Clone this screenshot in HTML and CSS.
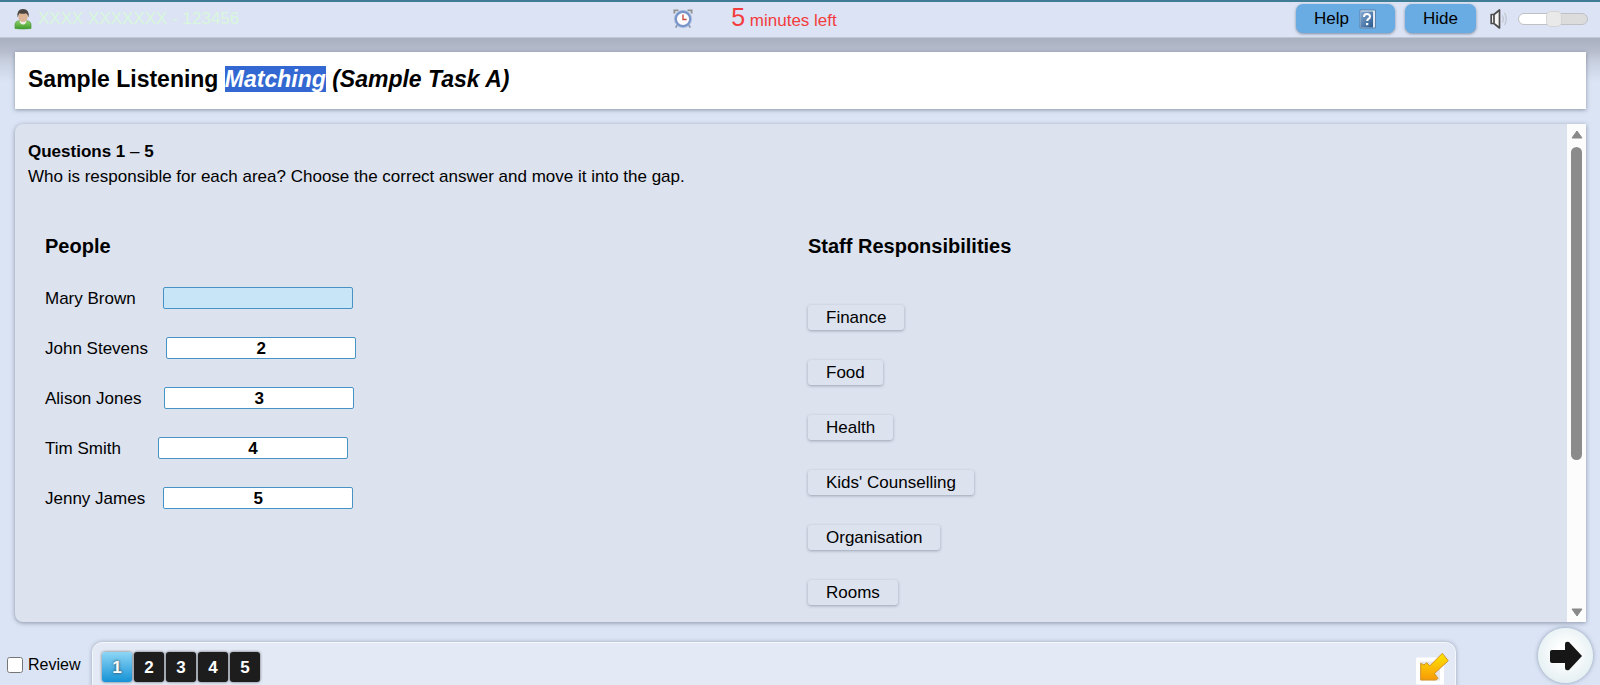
FILE: index.html
```html
<!DOCTYPE html>
<html lang="en">
<head>
<meta charset="utf-8">
<title>Sample Listening Matching</title>
<link rel="stylesheet" href="styles.css">
</head>
<body>
<header class="topbar">
  <div class="candidate">
    <svg class="icon-user" viewBox="0 0 18 22" aria-hidden="true">
      <defs>
        <linearGradient id="shirt" x1="0" y1="0" x2="0" y2="1"><stop offset="0" stop-color="#8fd06a"/><stop offset="1" stop-color="#3d9a2a"/></linearGradient>
      </defs>
      <path d="M1 20.500V17q0-4 4.500-4.300h7Q17 13 17 17v3.500q-8 1-16 0Z" fill="url(#shirt)" stroke="#4b9a38" stroke-width=".7"/>
      <path d="M5.500 12.500h7Q12 16.500 9 16.500T5.500 12.500Z" fill="#f1eee8"/>
      <ellipse cx="9" cy="8.500" rx="4.700" ry="5.500" fill="#dcb597"/>
      <path d="M3.600 9.500Q2.300 1 9 1t5.600 8.500Q13.700 6 12 5.200 9 6.500 5.400 5.200 4.300 7 3.600 9.500Z" fill="#4a4541"/>
    </svg>
    <span>XXXX XXXXXXX - 123456</span>
  </div>
  <div class="timer">
    <svg class="icon-clock" viewBox="0 0 22 22" aria-hidden="true">
      <path d="M1.500 5V1.500H6M20.500 5V1.500H16" fill="none" stroke="#929292" stroke-width="2"/>
      <path d="m5 17-2 3.500M17 17l2 3.500" stroke="#8b98ab" stroke-width="2"/>
      <circle cx="11" cy="11" r="8" fill="#fdfdff" stroke="#7895c9" stroke-width="2.600"/>
      <circle cx="11" cy="11" r="9.500" fill="none" stroke="#a6b8d8" stroke-width=".8"/>
      <path d="M11 6v5.500h4" fill="none" stroke="#c9473f" stroke-width="1.500"/>
    </svg>
    <p class="time"><span class="time-value">5</span> minutes left</p>
  </div>
  <div class="tools">
    <button class="tool" type="button">Help
      <svg class="icon-help" viewBox="0 0 18 20" aria-hidden="true">
        <defs><linearGradient id="book" x1="0" y1="0" x2="1" y2="1"><stop offset="0" stop-color="#86aad0"/><stop offset="1" stop-color="#28588f"/></linearGradient></defs>
        <path d="M1 1h15.500v18H1z" fill="#dfeaf4" stroke="#5e83aa"/>
        <path d="M1.500 2.500H14v16H1.500z" fill="url(#book)"/>
        <path d="M5 8q0-3 3-3t3 2.700Q11 9.200 9.300 10 8.200 10.600 8.200 12" fill="none" stroke="#fff" stroke-width="2"/>
        <path d="M7 14h2.300v2.200H7z" fill="#fff"/>
      </svg>
    </button>
    <button class="tool" type="button">Hide</button>
    <svg class="icon-sound" viewBox="0 0 18 20" aria-hidden="true">
      <path d="M1.200 5.500H4v9H1.200zM4 5.500 9.500 1v18L4 14.500Z" fill="#f6f6f6" stroke="#4c4c4c" stroke-width="1.700" stroke-linejoin="round"/>
      <path d="M12.300 6.500q2 3.500 0 7M14.500 4q3.500 6 0 12" fill="none" stroke="#c2c7cf" stroke-width="1.300"/>
    </svg>
    <input class="volume" type="range" min="0" max="100" value="52" aria-label="Volume">
  </div>
</header>

<main class="page">
  <h1 class="title">Sample Listening <em><mark>Matching</mark> (Sample Task A)</em></h1>

  <section class="panel">
    <div class="content">
      <p class="lead"><strong>Questions 1</strong> – <strong>5</strong><br>Who is responsible for each area? Choose the correct answer and move it into the gap.</p>
      <div class="columns">
        <div class="people">
          <h2>People</h2>
          <div class="row"><label for="q1">Mary Brown&nbsp;&nbsp;&nbsp;&nbsp;&nbsp;</label><input class="gap current" id="q1" type="text" value=""></div>
          <div class="row"><label for="q2">John Stevens&nbsp;&nbsp;&nbsp;</label><input class="gap" id="q2" type="text" value="2"></div>
          <div class="row"><label for="q3">Alison Jones&nbsp;&nbsp;&nbsp;&nbsp;</label><input class="gap" id="q3" type="text" value="3"></div>
          <div class="row"><label for="q4">Tim Smith&nbsp;&nbsp;&nbsp;&nbsp;&nbsp;&nbsp;&nbsp;</label><input class="gap" id="q4" type="text" value="4"></div>
          <div class="row"><label for="q5">Jenny James&nbsp;&nbsp;&nbsp;</label><input class="gap" id="q5" type="text" value="5"></div>
        </div>
        <div class="staff">
          <h2>Staff Responsibilities</h2>
          <div class="options">
            <button class="option" type="button">Finance</button>
            <button class="option" type="button">Food</button>
            <button class="option" type="button">Health</button>
            <button class="option" type="button">Kids' Counselling</button>
            <button class="option" type="button">Organisation</button>
            <button class="option" type="button">Rooms</button>
          </div>
        </div>
      </div>
    </div>
    <div class="scroll" aria-hidden="true">
      <svg class="scroll-arrow" viewBox="0 0 12 9"><path d="M6 1 11 8H1Z"/></svg>
      <div class="scroll-track"><div class="scroll-thumb"></div></div>
      <svg class="scroll-arrow" viewBox="0 0 12 9"><path d="M1 1h10L6 8Z"/></svg>
    </div>
  </section>
</main>

<footer class="footer">
  <label class="review"><input type="checkbox"> Review</label>
  <nav class="navigator" aria-label="Questions">
    <button class="number active" type="button">1</button>
    <button class="number" type="button">2</button>
    <button class="number" type="button">3</button>
    <button class="number" type="button">4</button>
    <button class="number" type="button">5</button>
    <button class="collapse" type="button" aria-label="Minimise">
      <svg viewBox="0 0 35 34" aria-hidden="true">
        <defs><linearGradient id="gold" x1="0" y1="0" x2="0" y2="1"><stop offset="0" stop-color="#ffe600"/><stop offset="1" stop-color="#f79a08"/></linearGradient></defs>
        <rect x="4" y="7.500" width="24" height="23" fill="#e4e6e8" stroke="#fff" stroke-width="4"/>
        <path d="M28.300 1.300 34.300 8.700 20.500 21.500 24 26.300 22.300 28H6.700V11.300L10 13 12.700 10.700 15.700 14Z" fill="url(#gold)" stroke="#d29228" stroke-linejoin="round"/>
      </svg>
    </button>
  </nav>
  <button class="next" type="button" aria-label="Next">
    <svg viewBox="0 0 34 30" aria-hidden="true"><path d="M3 9h13V3q0-3 4-2l13 14-13 14q-4 1-4-2v-5H3q-2 0-2-2v-9q0-2 2-2Z" fill="#161616"/></svg>
  </button>
</footer>
</body>
</html>
```
FILE: styles.css
```css
* { box-sizing: border-box; }

body {
  margin: 0;
  height: 100vh;
  display: flex;
  flex-direction: column;
  overflow: hidden;
  background: #dae4f5;
  color: #000;
  font: 17px/25px "Liberation Sans", Arial, sans-serif;
}

button, input { font: inherit; color: inherit; }

h1, h2, p { margin: 0; }

.topbar {
  display: grid;
  grid-template-columns: 1fr auto 1fr;
  align-items: center;
  height: 38px;
  flex: none;
  padding: 0 12px 2px 14px;
  border-top: 2px solid #3f7d96;
  border-bottom: 1px solid #c0c8d5;
  background: #dbe3f4;
}

.candidate {
  display: flex;
  align-items: center;
  gap: 6px;
  color: #d9f7dc;
}

.icon-user { width: 18px; height: 22px; }

.timer {
  display: flex;
  align-items: center;
  gap: 38px;
  margin-right: 92px;
  color: #f33c3e;
}

.icon-clock { width: 20px; height: 20px; }
.time-value { font-size: 25px; }

.tools {
  display: flex;
  align-items: center;
  justify-content: flex-end;
  gap: 10px;
}

.tool {
  display: flex;
  align-items: center;
  gap: 10px;
  height: 29px;
  padding: 0 18px;
  border: 0;
  border-radius: 7px;
  background: #69ace4;
  box-shadow: 0 1px 3px rgba(60, 80, 110, .6);
}

.icon-help { width: 18px; height: 20px; }
.icon-sound { width: 18px; height: 20px; margin-left: 4px; }

.volume {
  appearance: none;
  width: 70px;
  height: 12px;
  margin: 0;
  border: 1px solid #bfc1c4;
  border-radius: 6px;
  background: linear-gradient(90deg, #fff 50%, #dcdcdc 50%);
}

.volume::-webkit-slider-thumb {
  appearance: none;
  width: 16px;
  height: 16px;
  border: 1px solid #d5d5d5;
  border-radius: 5px;
  background: #e9e9e9;
}

.page {
  flex: 1;
  min-height: 0;
  display: flex;
  flex-direction: column;
  gap: 15px;
  padding: 14px 14px 0 15px;
  background: linear-gradient(#a8b1bf, #b7bdce 14px, #c6cede 22px, #dae4f5 44px);
}

.title {
  padding: 12px 13px 14px;
  background: #fff;
  box-shadow: 0 1px 4px rgba(60, 70, 90, .5);
  font-size: 23px;
  line-height: 31px;
}

.title mark { background: #3367d1; color: #fff; }

.panel {
  flex: 1;
  min-height: 0;
  display: flex;
  overflow: hidden;
  border-radius: 8px 0 0 8px;
  background: #dce2ee;
  box-shadow: 0 1px 4px rgba(60, 70, 90, .5);
}

.content { flex: 1; padding: 15px 13px; }

.columns {
  display: grid;
  grid-template-columns: 1fr 1fr;
  margin-top: 44px;
}

.people, .staff { padding-left: 17px; }

h2 { font-size: 20px; line-height: 26px; }

.row {
  display: flex;
  align-items: center;
  gap: 4px;
  height: 22px;
  margin-top: 28px;
}

.gap {
  width: 190px;
  height: 22px;
  padding: 0;
  border: 1px solid #4793c6;
  border-radius: 2px;
  background: #fff;
  font-weight: bold;
  text-align: center;
}

.current { background: #c7e5f6; }

.options {
  display: flex;
  flex-direction: column;
  align-items: flex-start;
  gap: 30px;
  margin-top: 46px;
}

.option {
  height: 25px;
  padding: 0 18px;
  border: 0;
  border-radius: 3px;
  background: #dce2ee;
  box-shadow: 0 1px 3px rgba(60, 70, 90, .4);
}

.scroll {
  display: flex;
  flex-direction: column;
  align-items: center;
  width: 19px;
  padding: 6px 0 5px;
  background: #fcfcfc;
}

.scroll-arrow { width: 12px; height: 9px; fill: #898989; stroke: #898989; stroke-linejoin: round; }
.scroll-track { flex: 1; padding: 8px 0; }
.scroll-thumb { width: 11px; height: 69%; border-radius: 6px; background: #8b8b8b; }

.footer {
  flex: none;
  display: flex;
  align-items: flex-start;
  height: 63px;
}

.review {
  display: flex;
  align-items: center;
  gap: 5px;
  width: 92px;
  padding: 30px 0 0 7px;
  font-size: 16px;
}

.review input { width: 16px; height: 16px; margin: 0; }

.navigator {
  flex: 1;
  display: flex;
  gap: 2px;
  height: 60px;
  margin-top: 20px;
  padding: 9px 6px 0 9px;
  border: 1px solid #f4f7fc;
  border-radius: 10px;
  background: #e3eaf6;
  box-shadow: 0 0 4px rgba(60, 70, 90, .4);
}

.number {
  width: 30px;
  height: 30px;
  padding: 0;
  border: 0;
  border-radius: 3px;
  background: #1d1d1d;
  box-shadow: 0 0 3px rgba(0, 0, 0, .6);
  color: #fff;
  font-weight: bold;
}

.active {
  background: linear-gradient(#8dd6f6, #1592d6);
  text-shadow: 0 0 3px #333;
}

.collapse {
  width: 35px;
  height: 34px;
  margin-left: auto;
  padding: 0;
  border: 0;
  background: none;
}

.next {
  display: grid;
  place-items: center;
  width: 55px;
  height: 55px;
  margin: 6px 7px 0 82px;
  padding: 0;
  border: 0;
  border-radius: 50%;
  background: radial-gradient(circle at 50% 45%, #fff 20%, #e4eff2 75%);
  box-shadow: 0 0 4px rgba(60, 80, 110, .5);
}

.next svg { width: 34px; height: 30px; }
```
